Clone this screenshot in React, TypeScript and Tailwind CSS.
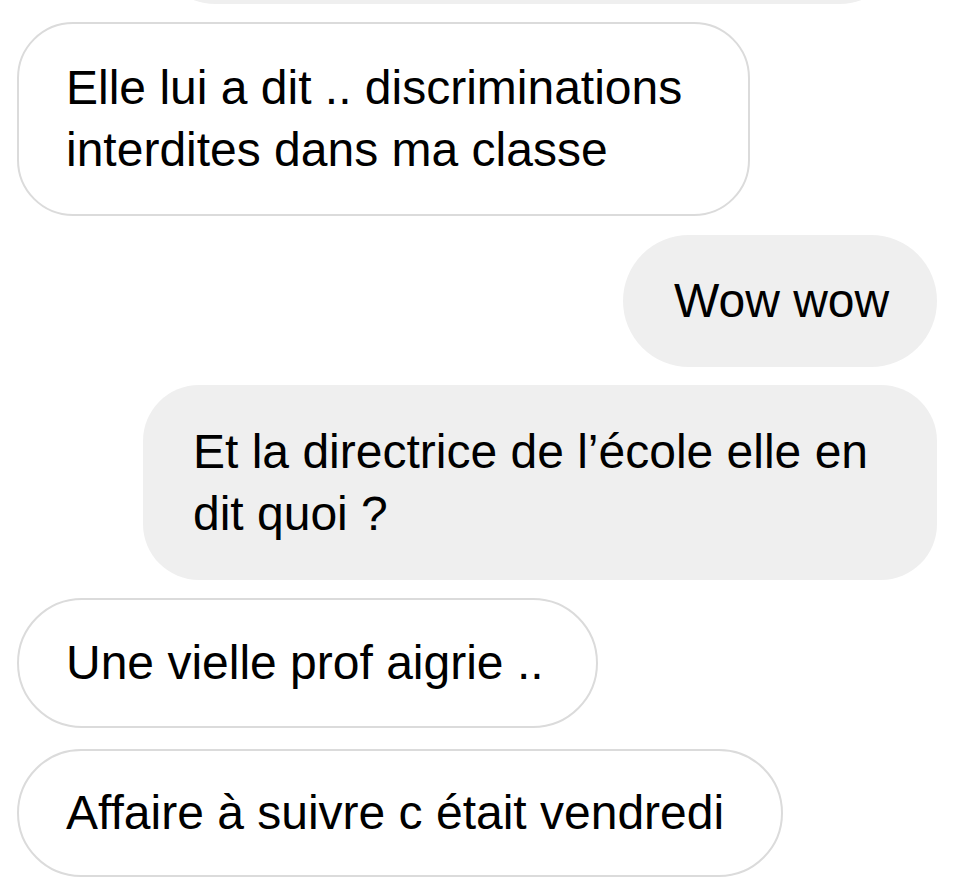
import React from "react";

const App = () => {
  return (
    <div
      className="w-[974px] h-[884px] overflow-hidden bg-white text-black"
      style={{ fontFamily: '"Liberation Sans", Arial, sans-serif' }}
    >
      <div className="flex flex-col gap-[18px] pl-[17px] pr-[37px] text-[48px] leading-[62px]">
        {/* previous message, scrolled off the top */}
        <div className="-mt-[128px] ml-[133px] w-[755px] h-[132px] rounded-full bg-[#efefef]" />

        <div className="self-start w-[733px] rounded-[56px] border-2 border-[#dbdbdb] px-[47px] py-[33px] whitespace-nowrap">
          Elle lui a dit .. discriminations
          <br />
          interdites dans ma classe
        </div>

        <div className="self-end mt-[1px] w-[314px] rounded-full border-2 border-transparent bg-[#efefef] pl-[49px] py-[33px] whitespace-nowrap">
          Wow wow
        </div>

        <div className="self-end w-[794px] rounded-[56px] border-2 border-transparent bg-[#efefef] px-[48px] pt-[34px] pb-[33px] whitespace-nowrap">
          Et la directrice de l’école elle en
          <br />
          dit quoi ?
        </div>

        <div className="self-start w-[581px] rounded-full border-2 border-[#dbdbdb] px-[47px] py-[32px] whitespace-nowrap">
          Une vielle prof aigrie ..
        </div>

        <div className="self-start mt-[3px] w-[766px] rounded-full border-2 border-[#dbdbdb] px-[47px] py-[31px] whitespace-nowrap">
          Affaire à suivre c était vendredi
        </div>
      </div>
    </div>
  );
};

export default App;
